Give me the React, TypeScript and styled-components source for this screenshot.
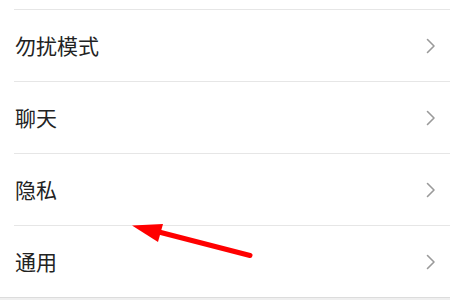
import React from 'react';
import styled, { createGlobalStyle } from 'styled-components';

const GlobalStyle = createGlobalStyle`
  html, body {
    margin: 0;
    padding: 0;
    background: #ffffff;
    font-family: "Noto Sans CJK SC", "Noto Sans", sans-serif;
  }
`;

const items = ['勿扰模式', '聊天', '隐私', '通用'];

const App: React.FC = () => {
  return (
    <>
      <GlobalStyle />
      <StyledPage>
        <TopGap />
        <List>
          {items.map((label) => (
            <Row key={label}>
              <Label>{label}</Label>
              <Chevron viewBox="0 0 10 16" aria-hidden>
                <polyline points="1.5,1.5 8,8 1.5,14.5" />
              </Chevron>
            </Row>
          ))}
        </List>
        <Footer />
        <Arrow viewBox="0 0 450 300" aria-hidden>
          <line x1="250" y1="255.5" x2="155" y2="231" />
          <polygon points="132,225.5 163,224 158,242" />
        </Arrow>
      </StyledPage>
    </>
  );
};

export default App;

const StyledPage = styled.div`
  position: relative;
  width: 450px;
  height: 300px;
  overflow: hidden;
  background: #ffffff;
`;

const TopGap = styled.div`
  height: 9px;
`;

const List = styled.div`
  display: flex;
  flex-direction: column;
  border-bottom: 1px solid #dcdcdc;
`;

const Row = styled.div`
  height: 71px;
  margin-left: 14px;
  padding-right: 14px;
  border-top: 1px solid #e6e6e6;
  display: flex;
  align-items: center;
  justify-content: space-between;
`;

const Label = styled.span`
  padding-left: 1px;
  font-size: 21px;
  line-height: 1;
  color: #222222;
`;

const Chevron = styled.svg`
  width: 10px;
  height: 16px;
  fill: none;
  stroke: #9a9a9a;
  stroke-width: 1.6;
  stroke-linecap: round;
  stroke-linejoin: round;
`;

const Footer = styled.div`
  height: 10px;
  background: #efefef;
`;

const Arrow = styled.svg`
  position: absolute;
  left: 0;
  top: 0;
  width: 450px;
  height: 300px;
  pointer-events: none;

  line {
    stroke: #ff0000;
    stroke-width: 5;
    stroke-linecap: round;
  }

  polygon {
    fill: #ff0000;
  }
`;
